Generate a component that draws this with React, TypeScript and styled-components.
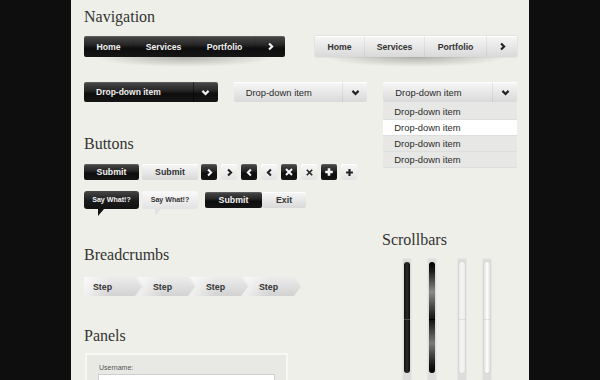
import React from 'react';
import styled, { createGlobalStyle } from 'styled-components';

const GlobalStyle = createGlobalStyle`
  html, body { margin: 0; padding: 0; overflow: hidden; background: #0e0e0e; }
  body { font-family: "Liberation Sans", Arial, sans-serif; }
  * { box-sizing: border-box; }
`;

const DARK = 'linear-gradient(to bottom, #4a4a4a 0%, #262626 42%, #0e0e0e 58%, #151515 100%)';
const LIGHT = 'linear-gradient(to bottom, #f7f7f7 0%, #e8e8e8 50%, #d9d9d9 100%)';

const Page = styled.div`
  width: 458px;
  height: 380px;
  margin: 0 auto;
  padding: 7px 12px 0 13px;
  background: #efefe9;
  overflow: hidden;
`;

const Heading = styled.h2<{ $mt?: number }>`
  margin: ${p => p.$mt ?? 0}px 0 0;
  font-family: "Liberation Serif", Georgia, serif;
  font-weight: normal;
  font-size: 16px;
  line-height: 20px;
  color: #333;
`;

/* ---------- icons ---------- */
type GlyphKind = 'right' | 'left' | 'down' | 'close' | 'plus';
const Glyph = ({ kind, color, size = 9, stroke = 2.3 }: { kind: GlyphKind; color: string; size?: number; stroke?: number }) => {
  const shapes: Record<GlyphKind, React.ReactNode> = {
    right: <polyline points="3.4,1.6 6.8,5 3.4,8.4" />,
    left: <polyline points="6.6,1.6 3.2,5 6.6,8.4" />,
    down: <polyline points="1.6,3.2 5,6.6 8.4,3.2" />,
    close: <path d="M2 2 L8 8 M8 2 L2 8" />,
    plus: <path d="M5 1.2 V8.8 M1.2 5 H8.8" />,
  };
  return (
    <svg width={size} height={size} viewBox="0 0 10 10" fill="none" stroke={color} strokeWidth={stroke} strokeLinejoin="miter">
      {shapes[kind]}
    </svg>
  );
};

/* ---------- navigation ---------- */
const NavRow = styled.div`
  display: flex;
  gap: 30px;
  margin-top: 9px;
`;
const NavBlock = styled.div`
  display: flex;
  flex-direction: column;
`;
const NavBar = styled.nav<{ $dark?: boolean }>`
  display: flex;
  height: 21px;
  border-radius: 2px;
  background: ${p => (p.$dark ? DARK : LIGHT)};
  box-shadow: ${p => (p.$dark ? 'inset 0 1px 0 rgba(255,255,255,0.12)' : 'inset 0 1px 0 #fff, 0 0 0 1px rgba(0,0,0,0.04)')};
`;
const NavItem = styled.a<{ $w: number; $dark?: boolean }>`
  width: ${p => p.$w}px;
  display: flex;
  align-items: center;
  justify-content: center;
  font-weight: bold;
  font-size: 8.7px;
  color: ${p => (p.$dark ? '#f2f2f2' : '#333')};
  text-decoration: none;
  & + & {
    border-left: 1px solid ${p => (p.$dark ? 'rgba(0,0,0,0.45)' : 'rgba(0,0,0,0.05)')};
  }
`;
const NavShadow = styled.div`
  height: 10px;
  margin: 0 10px;
  background: radial-gradient(ellipse 50% 100% at 50% 0%, rgba(0,0,0,0.26), rgba(0,0,0,0) 100%);
`;

const Nav = ({ dark, width }: { dark?: boolean; width: number }) => (
  <NavBlock style={{ width }}>
    <NavBar $dark={dark}>
      <NavItem $w={49} $dark={dark}>Home</NavItem>
      <NavItem $w={60} $dark={dark}>Services</NavItem>
      <NavItem $w={62} $dark={dark}>Portfolio</NavItem>
      <NavItem $w={width - 171} $dark={dark}>
        <Glyph kind="right" color={dark ? '#f2f2f2' : '#222'} size={9} stroke={2.4} />
      </NavItem>
    </NavBar>
    <NavShadow />
  </NavBlock>
);

/* ---------- dropdowns ---------- */
const DropRow = styled.div`
  display: flex;
  gap: 16px;
  margin-top: 15px;
`;
const DropWrap = styled.div`
  position: relative;
  width: 134px;
`;
const DropHead = styled.div<{ $dark?: boolean }>`
  display: flex;
  height: 20px;
  border-radius: 2px;
  background: ${p => (p.$dark ? DARK : LIGHT)};
  color: ${p => (p.$dark ? '#f0f0f0' : '#2a2a2a')};
  box-shadow: ${p => (p.$dark ? 'inset 0 1px 0 rgba(255,255,255,0.12)' : 'inset 0 1px 0 #fff')};
`;
const DropLabel = styled.span<{ $dark?: boolean }>`
  flex: 1;
  display: flex;
  align-items: center;
  padding-left: 12px;
  font-size: ${p => (p.$dark ? '8.5px' : '9.4px')};
  font-weight: ${p => (p.$dark ? 'bold' : 'normal')};
`;
const DropCaret = styled.span<{ $dark?: boolean }>`
  width: 25px;
  display: flex;
  align-items: center;
  justify-content: center;
  border-left: 1px solid ${p => (p.$dark ? 'rgba(0,0,0,0.5)' : 'rgba(0,0,0,0.06)')};
`;
const DropMenu = styled.ul`
  position: absolute;
  top: 100%;
  left: 0;
  right: 0;
  margin: 0;
  padding: 2px 0 0;
  list-style: none;
  background: #e7e7e5;
`;
const DropOption = styled.li<{ $active?: boolean }>`
  height: 16px;
  display: flex;
  align-items: center;
  padding-left: 11px;
  font-size: 9.4px;
  color: #2a2a2a;
  background: ${p => (p.$active ? '#fff' : 'transparent')};
  border-bottom: 1px solid #dedede;
`;

const Dropdown = ({ dark, open }: { dark?: boolean; open?: boolean }) => (
  <DropWrap>
    <DropHead $dark={dark}>
      <DropLabel $dark={dark}>Drop-down item</DropLabel>
      <DropCaret $dark={dark}>
        <Glyph kind="down" color={dark ? '#f2f2f2' : '#222'} size={9} stroke={2.4} />
      </DropCaret>
    </DropHead>
    {open && (
      <DropMenu>
        <DropOption>Drop-down item</DropOption>
        <DropOption $active>Drop-down item</DropOption>
        <DropOption>Drop-down item</DropOption>
        <DropOption>Drop-down item</DropOption>
      </DropMenu>
    )}
  </DropWrap>
);

/* ---------- columns ---------- */
const Columns = styled.div`
  display: flex;
`;
const LeftCol = styled.div`
  width: 298px;
  flex: none;
`;
const RightCol = styled.div`
  flex: 1;
`;

/* ---------- buttons ---------- */
const ButtonRow = styled.div<{ $mt: number }>`
  display: flex;
  align-items: flex-start;
  gap: 3px;
  margin-top: ${p => p.$mt}px;
`;
const Btn = styled.button<{ $w: number; $dark?: boolean }>`
  width: ${p => p.$w}px;
  height: 16px;
  padding: 0;
  border: 0;
  border-radius: 2px;
  font-family: "Liberation Sans", Arial, sans-serif;
  font-weight: bold;
  font-size: 8.8px;
  color: ${p => (p.$dark ? '#f2f2f2' : '#333')};
  background: ${p => (p.$dark ? DARK : LIGHT)};
  box-shadow: ${p => (p.$dark ? 'inset 0 1px 0 rgba(255,255,255,0.12)' : 'inset 0 1px 0 #fff')};
`;
const IconGroup = styled.div`
  display: flex;
  gap: 4px;
`;
const IconBtn = styled.button<{ $dark?: boolean }>`
  width: 16px;
  height: 16px;
  padding: 0;
  border: 0;
  border-radius: 2px;
  display: flex;
  align-items: center;
  justify-content: center;
  background: ${p => (p.$dark ? DARK : 'linear-gradient(to bottom, #f8f8f8, #e3e3e3)')};
  box-shadow: ${p => (p.$dark ? 'inset 0 1px 0 rgba(255,255,255,0.12)' : 'inset 0 1px 0 #fff')};
`;
const Bubble = styled.div<{ $w: number; $dark?: boolean }>`
  position: relative;
  width: ${p => p.$w}px;
  height: 18px;
  border-radius: 3px;
  display: flex;
  align-items: center;
  justify-content: center;
  font-weight: bold;
  font-size: 7.1px;
  color: ${p => (p.$dark ? '#f2f2f2' : '#333')};
  background: ${p => (p.$dark ? 'linear-gradient(to bottom, #474747, #1a1a1a 55%, #121212)' : 'linear-gradient(to bottom, #fafafa, #e2e2e2)')};
  &::after {
    content: '';
    position: absolute;
    left: ${p => (p.$dark ? 14 : 13)}px;
    bottom: -7px;
    border-top: 7px solid ${p => (p.$dark ? '#121212' : '#e2e2e2')};
    border-right: 6px solid transparent;
  }
`;
const Pair = styled.div`
  display: flex;
  margin: 1px 0 0 4px;
`;

/* ---------- breadcrumbs ---------- */
const Crumbs = styled.div`
  display: flex;
  height: 19px;
  margin-top: 12px;
`;
const CUT = 'polygon(0 0, calc(100% - 7px) 0, 100% 50%, calc(100% - 7px) 100%, 0 100%';
const Crumb = styled.div<{ $first?: boolean }>`
  flex: none;
  width: 58px;
  height: 19px;
  display: flex;
  align-items: center;
  padding-left: ${p => (p.$first ? 9 : 16)}px;
  margin-left: ${p => (p.$first ? 0 : -5)}px;
  font-weight: bold;
  font-size: 8.8px;
  color: #333;
  background:
    linear-gradient(to right, rgba(255,255,255,0.7), rgba(255,255,255,0) 45%),
    linear-gradient(to bottom, #ececec, #d2d2d2);
  clip-path: ${p => (p.$first ? `${CUT})` : `${CUT}, 7px 50%)`)};
`;

/* ---------- panel ---------- */
const Panel = styled.div`
  width: 203px;
  height: 60px;
  margin: 7px 0 0 1px;
  padding: 8px 11px;
  background: #e8e8e5;
  border: 2px solid #f7f7f4;
`;
const FieldLabel = styled.label`
  display: block;
  padding-left: 1px;
  font-size: 7px;
  line-height: 10px;
  color: #555;
`;
const TextInput = styled.input`
  display: block;
  width: 177px;
  height: 18px;
  margin-top: 1px;
  border: 1px solid #cfcfcf;
  background: #fff;
`;

/* ---------- scrollbars ---------- */
const ScrollArea = styled.div`
  display: flex;
  gap: 20px;
  margin-top: 8px;
  padding-left: 20px;
`;
const ScrollGroup = styled.div`
  display: flex;
  gap: 15px;
`;
const Track = styled.div`
  width: 10px;
  height: 140px;
  padding: 4px 2px 0;
  border-radius: 3px 3px 0 0;
  background: #dddddb;
  box-shadow: inset 0 0 0 1px #e6e6e4;
`;
type ThumbKind = 'dark' | 'glossy' | 'light' | 'shine';
const GRIP = (c: string) => `linear-gradient(to bottom, transparent 51%, ${c} 51%, ${c} 52.2%, transparent 52.2%)`;
const THUMBS: Record<ThumbKind, string> = {
  dark: `${GRIP('rgba(90,90,90,0.8)')}, linear-gradient(to right, #0d0d0d, #2c2c2c 50%, #0d0d0d)`,
  glossy: `${GRIP('#000')}, linear-gradient(to bottom, #000 0%, #1a1a1a 8%, #8a8a8a 27%, #2a2a2a 46%, #111 52%, #3a3a3a 60%, #7a7a7a 73%, #1a1a1a 92%, #000 100%)`,
  light: `${GRIP('rgba(0,0,0,0.08)')}, linear-gradient(to right, #ebebeb, #f5f5f5 50%, #ebebeb)`,
  shine: `${GRIP('rgba(0,0,0,0.08)')}, linear-gradient(to right, #e2e2e2, #ffffff 50%, #e2e2e2)`,
};
const Thumb = styled.div<{ $kind: ThumbKind }>`
  width: 6px;
  height: 111px;
  border-radius: 3px;
  background: ${p => THUMBS[p.$kind]};
  box-shadow: ${p => (p.$kind === 'light' || p.$kind === 'shine' ? '0 0 0 1px #d6d6d4' : 'none')};
`;

export default function App() {
  return (
    <>
      <GlobalStyle />
      <Page>
        <Heading>Navigation</Heading>
        <NavRow>
          <Nav dark width={201} />
          <Nav width={202} />
        </NavRow>

        <DropRow>
          <Dropdown dark />
          <Dropdown />
          <Dropdown open />
        </DropRow>

        <Columns>
          <LeftCol>
            <Heading $mt={32}>Buttons</Heading>
            <ButtonRow $mt={10}>
              <Btn $dark $w={55}>Submit</Btn>
              <Btn $w={56}>Submit</Btn>
              <IconGroup>
                <IconBtn $dark><Glyph kind="right" color="#f4f4f4" size={9} /></IconBtn>
                <IconBtn><Glyph kind="right" color="#222" size={9} /></IconBtn>
                <IconBtn $dark><Glyph kind="left" color="#f4f4f4" size={9} /></IconBtn>
                <IconBtn><Glyph kind="left" color="#222" size={9} /></IconBtn>
                <IconBtn $dark><Glyph kind="close" color="#f4f4f4" size={10} stroke={2} /></IconBtn>
                <IconBtn><Glyph kind="close" color="#222" size={9} stroke={1.8} /></IconBtn>
                <IconBtn $dark><Glyph kind="plus" color="#f4f4f4" size={10} stroke={2.6} /></IconBtn>
                <IconBtn><Glyph kind="plus" color="#222" size={9} stroke={2.4} /></IconBtn>
              </IconGroup>
            </ButtonRow>
            <ButtonRow $mt={11}>
              <Bubble $dark $w={55}>Say What!?</Bubble>
              <Bubble $w={56}>Say What!?</Bubble>
              <Pair>
                <Btn $dark $w={57}>Submit</Btn>
                <Btn $w={44}>Exit</Btn>
              </Pair>
            </ButtonRow>

            <Heading $mt={36}>Breadcrumbs</Heading>
            <Crumbs>
              <Crumb $first>Step</Crumb>
              <Crumb>Step</Crumb>
              <Crumb>Step</Crumb>
              <Crumb>Step</Crumb>
            </Crumbs>

            <Heading $mt={30}>Panels</Heading>
            <Panel>
              <FieldLabel>Username:</FieldLabel>
              <TextInput />
            </Panel>
          </LeftCol>

          <RightCol>
            <Heading $mt={128}>Scrollbars</Heading>
            <ScrollArea>
              <ScrollGroup>
                <Track><Thumb $kind="dark" /></Track>
                <Track><Thumb $kind="glossy" /></Track>
              </ScrollGroup>
              <ScrollGroup>
                <Track><Thumb $kind="light" /></Track>
                <Track><Thumb $kind="shine" /></Track>
              </ScrollGroup>
            </ScrollArea>
          </RightCol>
        </Columns>
      </Page>
    </>
  );
}
